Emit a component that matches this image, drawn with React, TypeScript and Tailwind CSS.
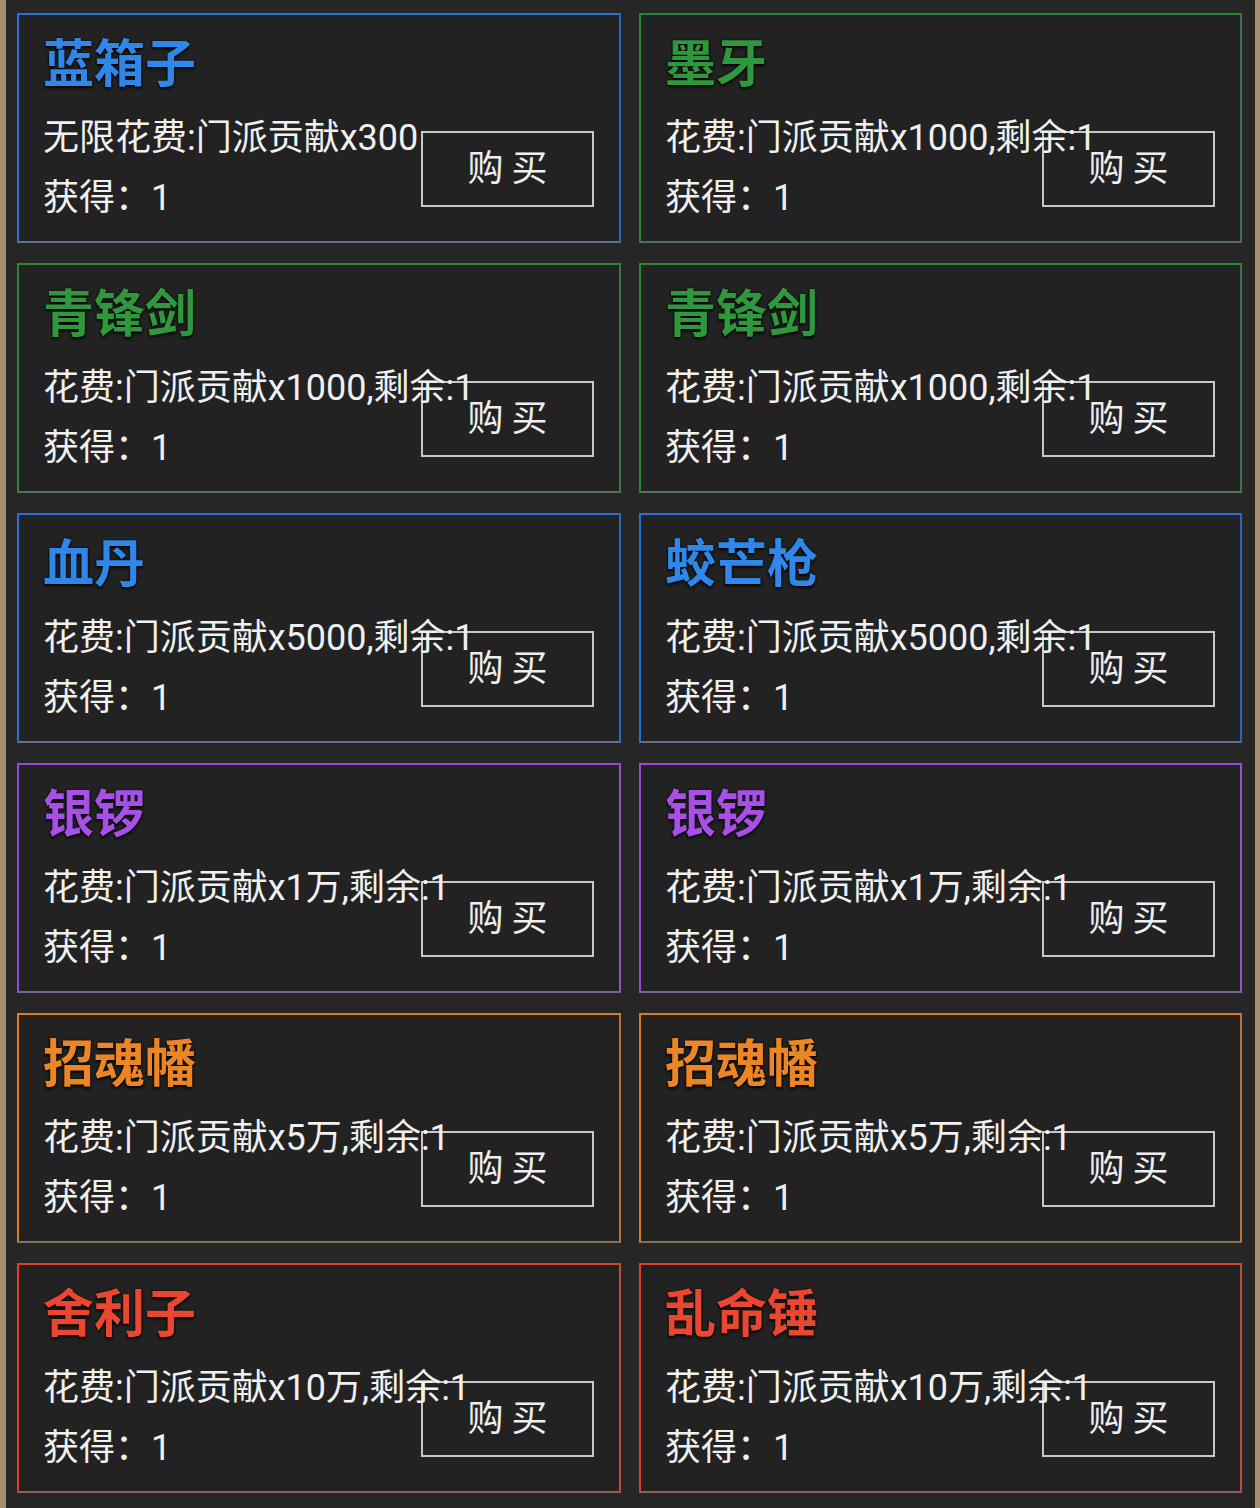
import clsx from "clsx";

type Tier = "blue" | "green" | "purple" | "orange" | "red";

interface ShopItem {
  name: string;
  cost: string;
  tier: Tier;
}

const tierStyles: Record<Tier, { card: string; title: string }> = {
  blue: {
    card: "border-t-[#2b6fd8] border-l-[#2b6fd8] border-r-[#2f66b8] border-b-[#60718c]",
    title: "text-[#2f87ea]",
  },
  green: {
    card: "border-t-[#27882f] border-l-[#27882f] border-r-[#3f7448] border-b-[#56715a]",
    title: "text-[#2f983c]",
  },
  purple: {
    card: "border-t-[#9a45dc] border-l-[#9a45dc] border-r-[#8e55c2] border-b-[#79688e]",
    title: "text-[#a650e6]",
  },
  orange: {
    card: "border-t-[#dc7a26] border-l-[#dc7a26] border-r-[#b8733c] border-b-[#86705c]",
    title: "text-[#ec8524]",
  },
  red: {
    card: "border-t-[#dc3f2b] border-l-[#dc3f2b] border-r-[#b6503f] border-b-[#88605c]",
    title: "text-[#ea4630]",
  },
};

const items: ShopItem[] = [
  { name: "蓝箱子", cost: "无限花费:门派贡献x300", tier: "blue" },
  { name: "墨牙", cost: "花费:门派贡献x1000,剩余:1", tier: "green" },
  { name: "青锋剑", cost: "花费:门派贡献x1000,剩余:1", tier: "green" },
  { name: "青锋剑", cost: "花费:门派贡献x1000,剩余:1", tier: "green" },
  { name: "血丹", cost: "花费:门派贡献x5000,剩余:1", tier: "blue" },
  { name: "蛟芒枪", cost: "花费:门派贡献x5000,剩余:1", tier: "blue" },
  { name: "银锣", cost: "花费:门派贡献x1万,剩余:1", tier: "purple" },
  { name: "银锣", cost: "花费:门派贡献x1万,剩余:1", tier: "purple" },
  { name: "招魂幡", cost: "花费:门派贡献x5万,剩余:1", tier: "orange" },
  { name: "招魂幡", cost: "花费:门派贡献x5万,剩余:1", tier: "orange" },
  { name: "舍利子", cost: "花费:门派贡献x10万,剩余:1", tier: "red" },
  { name: "乱命锤", cost: "花费:门派贡献x10万,剩余:1", tier: "red" },
];

const ShopCard = ({ item }: { item: ShopItem }) => {
  const style = tierStyles[item.tier];

  return (
    <div
      className={clsx(
        "relative h-[230px] border-2 bg-[#222222] pl-[24px] pt-[20px]",
        style.card,
      )}
    >
      {/* button sits under the cost text, which runs over its border */}
      <button className="absolute right-[25px] top-[116px] flex h-[76px] w-[173px] items-center justify-center border-2 border-[#c8c8c8] text-[36px] leading-none tracking-[8px] text-[#eeeeee]">
        <span className="pl-[8px]">购买</span>
      </button>
      <div className="relative flex flex-col text-[#f0f0f0]">
        <p
          className={clsx(
            "h-[60px] text-[51px] font-bold leading-[60px] [text-shadow:0_2px_3px_rgba(0,0,0,0.9),0_0_2px_rgba(0,0,0,0.9)]",
            style.title,
          )}
        >
          {item.name}
        </p>
        <p className="mt-[13px] h-[60px] whitespace-nowrap text-[36px] leading-[60px]">
          {item.cost}
        </p>
        <p className="h-[60px] whitespace-nowrap text-[36px] leading-[60px]">
          获得：1
        </p>
      </div>
    </div>
  );
};

const App = () => {
  return (
    <div className="flex h-[1508px] w-[1260px] overflow-hidden bg-[#262626] font-['Roboto','Noto_Sans_CJK_SC',sans-serif]">
      <div className="w-[6px] bg-[#a88f6c]" />
      <main className="grid flex-1 grid-cols-[604px_603px] content-start gap-x-[18px] gap-y-[20px] pl-[11px] pr-[8px] pt-[13px]">
        {items.map((item, index) => (
          <ShopCard key={index} item={item} />
        ))}
      </main>
      <div className="w-[5px] bg-[#a88f6c]" />
    </div>
  );
};

export default App;
